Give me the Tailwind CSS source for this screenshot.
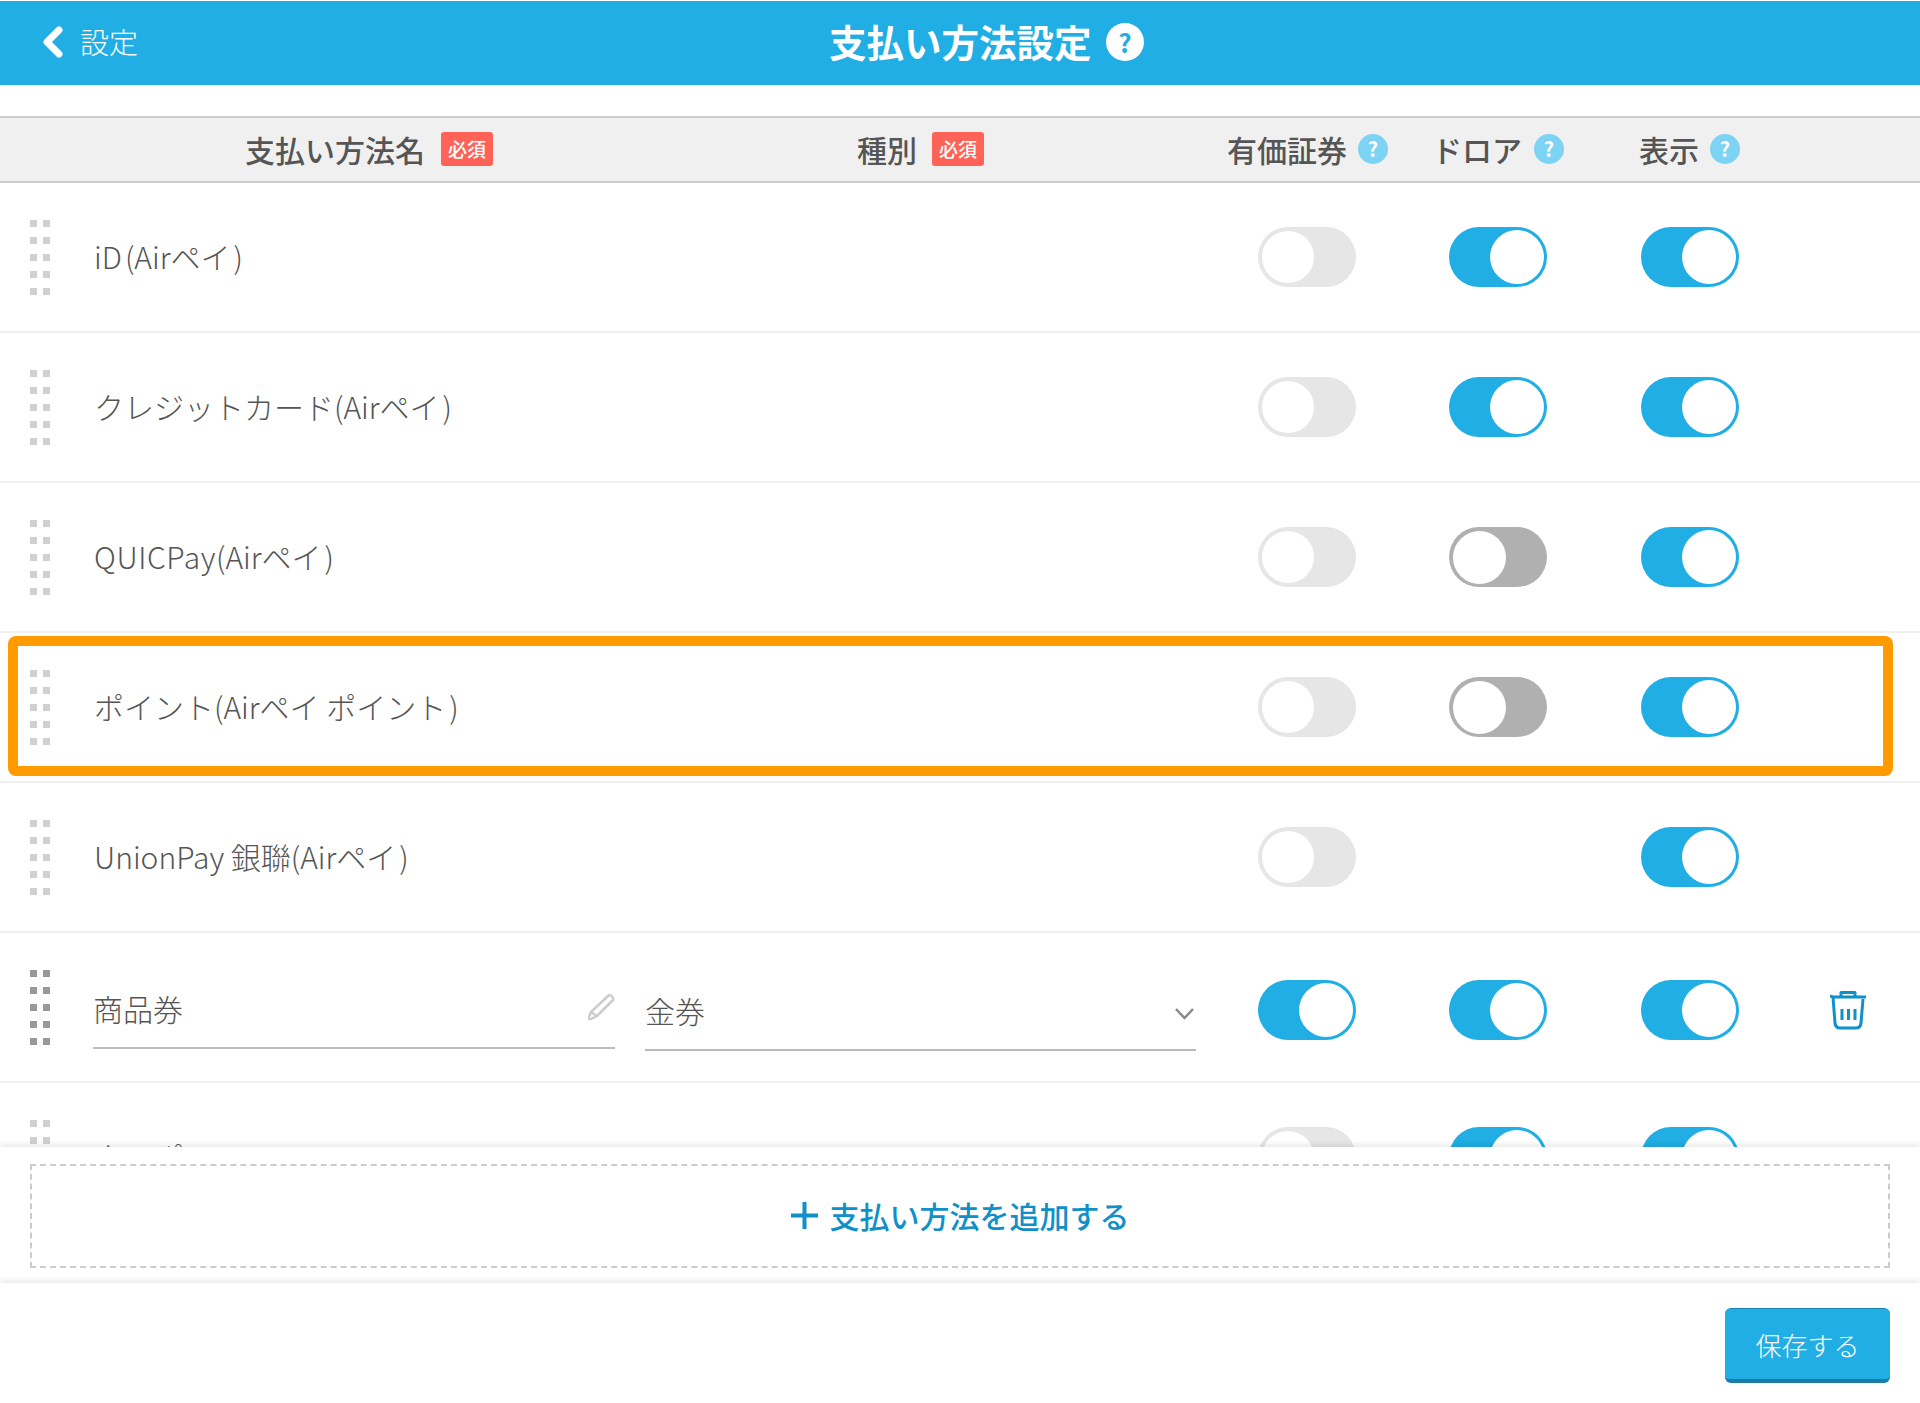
<!DOCTYPE html>
<html lang="ja">
<head>
  <meta charset="UTF-8" />
  <title>支払い方法設定</title>
  <script src="https://cdn.jsdelivr.net/npm/@tailwindcss/browser@4"></script>
</head>
<body class="bg-white font-['Noto_Sans_CJK_JP','Noto_Sans',sans-serif] text-[#555]">
  <div class="flex h-[1403px] w-[1920px] flex-col overflow-hidden">

    <!-- title bar -->
    <header class="flex h-[85px] shrink-0 items-center border-t border-white bg-[#20aee5] pb-[3px] text-white">
      <div class="flex w-[829px] items-center pl-[42px]">
        <svg class="h-[32px] w-[21px]" viewBox="0 0 21 32" fill="none" stroke="currentColor" stroke-width="7" stroke-linecap="round" stroke-linejoin="round"><path d="M17 4 5 16l12 12" /></svg>
        <span class="ml-[17px] text-[29px] font-light">設定</span>
      </div>
      <h1 class="mb-[1px] w-[261px] text-[37.500px] font-bold whitespace-nowrap">支払い方法設定</h1>
      <span class="ml-[16px] flex size-[38px] items-center justify-center rounded-full bg-white text-[26px] font-bold text-[#20aee5]">?</span>
    </header>

    <!-- column headings -->
    <div class="mt-[31px] flex h-[67px] shrink-0 items-center border-y-2 border-[#ccc] bg-[#f0f0f0] pb-[2px] text-[30px] leading-none font-medium whitespace-nowrap">
      <span class="ml-[245px] w-[179px]">支払い方法名</span>
      <span class="ml-[17px] flex h-[34px] w-[52px] items-center justify-center rounded-[3px] bg-[#ff6257] text-[19px] text-white">必須</span>
      <span class="ml-[364px] w-[59px]">種別</span>
      <span class="ml-[16px] flex h-[34px] w-[52px] items-center justify-center rounded-[3px] bg-[#ff6257] text-[19px] text-white">必須</span>
      <span class="ml-[243px] w-[119px]">有価証券</span>
      <span class="ml-[12px] flex size-[30px] items-center justify-center rounded-full bg-[#7dd3f3] text-[20px] font-bold text-white">?</span>
      <span class="ml-[44px] w-[88px]">ドロア</span>
      <span class="ml-[14px] flex size-[30px] items-center justify-center rounded-full bg-[#7dd3f3] text-[20px] font-bold text-white">?</span>
      <span class="ml-[75px] w-[58px]">表示</span>
      <span class="ml-[13px] flex size-[30px] items-center justify-center rounded-full bg-[#7dd3f3] text-[20px] font-bold text-white">?</span>
    </div>

    <!-- payment rows -->
    <div id="rows" class="min-h-0 flex-1 overflow-hidden"></div>

    <!-- add method -->
    <div class="z-10 h-[136px] shrink-0 bg-white px-[30px] pt-[17px] shadow-[0_-3px_5px_rgba(0,0,0,0.08)]">
      <button class="flex h-[104px] w-full items-center justify-center border-2 border-dashed border-[#ccc] pb-[2px] text-[30px] font-medium text-[#0f90c9]">
        <svg class="mr-[12px] size-[27px]" viewBox="0 0 27 27" fill="none" stroke="currentColor" stroke-width="4"><path d="M0 13.5h27M13.5 0v27" /></svg>
        支払い方法を追加する
      </button>
    </div>

    <!-- footer -->
    <footer class="z-20 flex h-[120px] shrink-0 justify-end bg-white pt-[25px] pr-[30px] shadow-[0_-3px_5px_rgba(0,0,0,0.08)]">
      <button class="h-[75px] w-[165px] rounded-[6px] border-t border-b-4 border-t-[#1a86b4] border-b-[#1a7da8] bg-[#20aee5] text-[26px] font-light text-white">保存する</button>
    </footer>
  </div>

  <script>
    const on = '<div class="flex h-[60px] w-[98px] items-center justify-end rounded-full bg-[#20aee5] pr-[3px]"><div class="size-[54px] rounded-full bg-white"></div></div>';
    const off = '<div class="flex h-[60px] w-[98px] items-center rounded-full bg-[#e6e6e6] pl-[4px]"><div class="size-[52px] rounded-full bg-white"></div></div>';
    const grey = '<div class="flex h-[60px] w-[98px] items-center rounded-full bg-[#b0b0b0] pl-[4px]"><div class="size-[53px] rounded-full bg-white"></div></div>';
    const onLow = '<div class="mt-[4px] flex h-[60px] w-[98px] items-center justify-end rounded-full bg-[#20aee5] pr-[3px]"><div class="size-[54px] rounded-full bg-white"></div></div>';
    const none = '<div></div>';
    const close = '<span class="ml-[3px]">)</span>';

    const gripDots = (color, extra) => '<div class="grid grid-cols-[7px_7px] gap-x-[6px] gap-y-[10px] ' + extra + '">' +
      ('<i class="h-[7px] ' + color + '"></i>').repeat(10) + '</div>';

    const rows = [
      { name: 'iD<span class="ml-[3px]">(</span>Airペイ' + close, t: [off, on, on] },
      { name: 'クレジットカード(Airペイ' + close, t: [off, on, on] },
      { name: '<span class="tracking-[0.6px]">QUICPay</span>(Airペイ' + close, t: [off, grey, on] },
      { name: 'ポイント(Airペイ ポイント' + close, t: [off, grey, on], mark: true },
      { name: 'UnionPay 銀聯(Airペイ' + close, t: [off, none, on] },
      { custom: true, t: [onLow, onLow, onLow] },
      { name: 'クーポン', t: [off, on, on] },
    ];

    const customCell = `
      <div class="-ml-[1px] flex h-[150px] items-start">
        <div class="mt-[31px] flex h-[85px] w-[522px] items-center justify-between border-b-2 border-[#bbb]">
          <span class="mt-[6px] text-[30px] font-light">商品券</span>
          <svg class="mt-[4px] h-[27px] w-[27px]" viewBox="0 0 27 27" fill="none" stroke="#ccc" stroke-width="2.500"><path d="M20 2c2-2 6 1 5 4L9 22l-6 3c-2 1-2-1-2-2l2-5Zm-17 16 6 4" /></svg>
        </div>
        <div class="mt-[33px] ml-[30px] flex h-[85px] w-[551px] items-center justify-between border-b-2 border-[#bbb]">
          <span class="mt-[6px] text-[30px] font-light">金券</span>
          <svg class="mt-[13px] mr-[2px] h-[12px] w-[19px]" viewBox="0 0 19 12" fill="none" stroke="#888" stroke-width="2.500"><path d="M1 1l8.500 9L18 1" /></svg>
        </div>
      </div>`;

    const trash = '<svg class="mt-[4px] ml-[91px] h-[39px] w-[36px]" viewBox="0 0 36 39" fill="none" stroke="#0f90c9" stroke-width="3" stroke-linejoin="round"><path d="M11 6V1.500h14V6M0 5l3 1h33M3 6l2 26q.5 5 5 5h16q4.500 0 5-5l2-24M12 18v11M18.500 18v11M25 18v11" /></svg>';

    document.getElementById('rows').innerHTML = rows.map((r) => `
      <div class="relative grid h-[150px] grid-cols-[94px_1164px_98px_93px_98px_94px_98px_1fr] items-center border-b-2 border-[#f0f0f0]">
        <div class="pl-[30px]">${r.custom ? gripDots('bg-[#999]', 'mb-[2px]') : gripDots('bg-[#d0d0d0]', '')}</div>
        ${r.custom ? customCell : `<div class="mb-[2px] text-[30px] font-light whitespace-nowrap">${r.name}</div>`}
        ${r.t[0]}<div></div>${r.t[1]}<div></div>${r.t[2]}
        ${r.custom ? trash : '<div></div>'}
        ${r.mark ? '<div class="absolute top-[3px] left-[8px] h-[140px] w-[1885px] rounded-[8px] border-[10px] border-[#ff9a00]"></div>' : ''}
      </div>`).join('');
  </script>
</body>
</html>
